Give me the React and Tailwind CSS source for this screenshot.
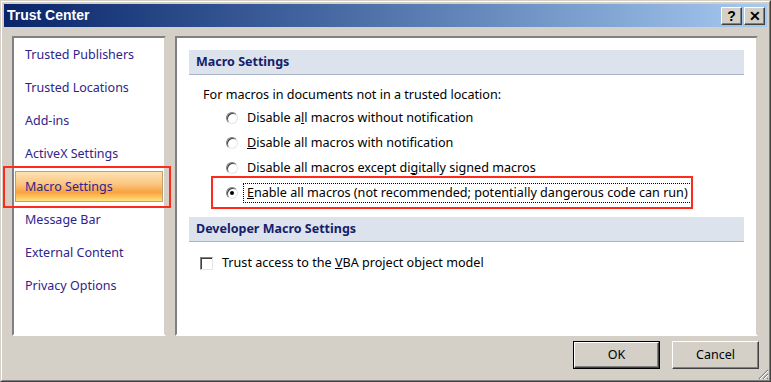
import React from 'react';

const NAV = [
  'Trusted Publishers',
  'Trusted Locations',
  'Add-ins',
  'ActiveX Settings',
  'Macro Settings',
  'Message Bar',
  'External Content',
  'Privacy Options',
];

// access key letters are underlined, as in the real dialog
const OPTIONS = [
  { pre: 'Disable a', key: 'l', post: 'l macros without notification' },
  { pre: '', key: 'D', post: 'isable all macros with notification' },
  { pre: 'Disable all macros except di', key: 'g', post: 'itally signed macros' },
  { pre: '', key: 'E', post: 'nable all macros (not recommended; potentially dangerous code can run)', checked: true },
];

function Radio({ checked }) {
  return (
    <span className="relative block w-[12px] h-[12px] rounded-full bg-white border border-t-[#808080] border-l-[#808080] border-r-[#e6e6e6] border-b-[#e6e6e6] shadow-[inset_1px_1px_0_#404040]">
      {checked && <span className="absolute left-[3px] top-[3px] w-[4px] h-[4px] rounded-full bg-black" />}
    </span>
  );
}

function SectionHeader({ children }) {
  return (
    <div className="mx-[12px] h-[25px] flex items-center pl-[7px] pt-[1px] bg-[#dde3ec] border-b border-[#a9b4c4] text-[12.5px] font-bold text-[#15206b]">
      {children}
    </div>
  );
}

function DlgButton({ children, isDefault }) {
  return (
    <div className={`w-[87px] h-[28px] ${isDefault ? 'border border-black' : ''}`}>
      <div className="w-full h-full flex items-center justify-center bg-[#d4d0c8] border border-t-white border-l-white border-r-[#404040] border-b-[#404040] shadow-[inset_-1px_-1px_0_#808080] text-[12.5px] text-black">
        {children}
      </div>
    </div>
  );
}

function CaptionButton({ children }) {
  return (
    <div className="w-[21px] h-[18px] flex items-center justify-center bg-[#d4d0c8] border border-t-white border-l-white border-r-[#404040] border-b-[#404040] shadow-[inset_-1px_-1px_0_#808080] text-[14px] font-bold text-black font-['Liberation_Sans',sans-serif] leading-none">
      {children}
    </div>
  );
}

export default function App() {
  return (
    <div className="w-[771px] h-[382px] bg-[#d4d0c8] border border-t-[#d4d0c8] border-l-[#d4d0c8] border-r-[#404040] border-b-[#404040] font-['Noto_Sans',sans-serif]">
      <div className="w-full h-full border border-t-white border-l-white border-r-[#808080] border-b-[#808080] p-[2px] flex flex-col relative">
        {/* title bar */}
        <div className="h-[23px] flex items-center justify-between bg-gradient-to-r from-[#0a246a] to-[#a6caf0] pl-[3px] pr-[2px]">
          <span className="text-white font-bold text-[14px] font-['Liberation_Sans',sans-serif]">Trust Center</span>
          <div className="flex gap-[2px]">
            <CaptionButton>?</CaptionButton>
            <CaptionButton>✕</CaptionButton>
          </div>
        </div>

        <div className="flex pl-[8px] pt-[9px] gap-[9px]">
          {/* nav */}
          <div className="w-[154px] h-[300px] bg-white border-2 border-t-[#808080] border-l-[#808080] border-r-[#d4d0c8] border-b-white">
            {NAV.map((item) => {
              const sel = item === 'Macro Settings';
              return (
                <div key={item} className="relative h-[33px] flex">
                  <div className={`flex-1 flex items-center pt-[2px] text-[12.5px] text-[#2f238c] ${sel ? 'pl-[9px] mx-[1px] my-[1px] border border-[#c3a06a] bg-[linear-gradient(to_bottom,#fde3b6_0%,#fbc27a_45%,#f8a23f_70%,#fde27d_100%)]' : 'pl-[11px]'}`}>
                    {item}
                  </div>
                  {sel && <div className="absolute left-[-11px] right-[-7px] top-[-4px] bottom-[-5px] border-2 border-[#ff2a1a]" />}
                </div>
              );
            })}
          </div>

          {/* settings */}
          <div className="w-[583px] h-[300px] bg-white border-2 border-t-[#808080] border-l-[#808080] border-r-[#d4d0c8] border-b-white text-[12.6px] text-black">
            <div className="mt-[12px]">
              <SectionHeader>Macro Settings</SectionHeader>
            </div>
            <div className="mt-[10px] h-[20px] flex items-center pl-[26px] pt-[1px]">
              For macros in documents not in a trusted location:
            </div>
            {OPTIONS.map((o, i) => (
              <div key={i} className="relative h-[25px] flex items-center pl-[49px]">
                <Radio checked={o.checked} />
                <span className={`ml-[5px] h-[20px] flex items-center px-[3px] pt-[1px] border border-dotted ${o.checked ? 'border-black' : 'border-transparent'}`}>
                  {o.pre}<span className="underline">{o.key}</span>{o.post}
                </span>
                {o.checked && <div className="absolute left-[34px] top-[-4px] w-[482px] h-[33px] border-2 border-[#ff2a1a]" />}
              </div>
            ))}
            <div className="mt-[12px]">
              <SectionHeader>Developer Macro Settings</SectionHeader>
            </div>
            <div className="mt-[11px] h-[20px] flex items-center pl-[23px]">
              <span className="w-[13px] h-[13px] bg-white border border-t-[#808080] border-l-[#808080] border-r-[#e6e6e6] border-b-[#e6e6e6] shadow-[inset_1px_1px_0_#404040]" />
              <span className="ml-[9px] pt-[1px]">Trust access to the <span className="underline">V</span>BA project object model</span>
            </div>
          </div>
        </div>

        {/* buttons */}
        <div className="mt-[5px] flex justify-end gap-[12px] pr-[8px]">
          <DlgButton isDefault>OK</DlgButton>
          <DlgButton>Cancel</DlgButton>
        </div>

        {/* size grip */}
        <svg className="absolute right-0 bottom-0" width="12" height="12" viewBox="0 0 12 12">
          <path d="M11 2 L2 11 M11 6 L6 11 M11 10 L10 11" stroke="#808080" strokeWidth="1.2" />
          <path d="M11 3 L3 11 M11 7 L7 11" stroke="#ffffff" strokeWidth="1" />
        </svg>
      </div>
    </div>
  );
}
